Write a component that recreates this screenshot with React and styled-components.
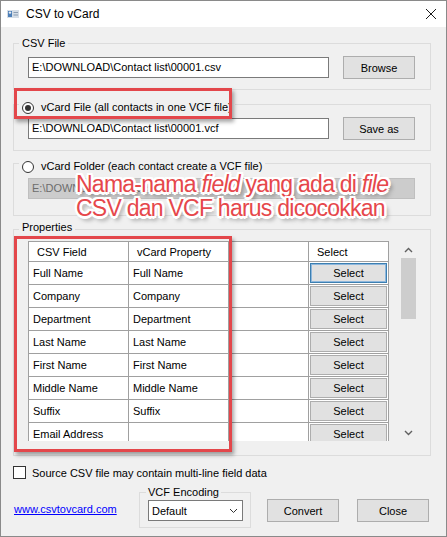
import React from 'react';
import styled, { createGlobalStyle } from 'styled-components';

const GlobalStyle = createGlobalStyle`
  html, body { margin: 0; padding: 0; background: #ffffff; }
  body {
    font-family: "Liberation Sans", Arial, sans-serif;
    font-size: 11px;
    color: #000;
  }
  * { box-sizing: border-box; }
`;

const Window = styled.div`
  width: 447px;
  height: 537px;
  border: 1px solid #8a8a8a;
  background: #f0f0f0;
  display: flex;
  flex-direction: column;
  overflow: hidden;
`;

const TitleBar = styled.div`
  height: 26px;
  flex: none;
  background: #ffffff;
  display: flex;
  align-items: center;
  padding-left: 6px;
  padding-right: 9px;
`;

const Title = styled.span`
  margin-left: 7px;
  font-size: 12px;
  flex: 1;
`;

const Body = styled.div`
  position: relative;
  flex: 1;
  display: flex;
  flex-direction: column;
  padding: 0 15px 0 12px;
`;

const Group = styled.div`
  margin-top: ${p => p.$mt}px;
  border: 1px solid #dcdcdc;
  display: flex;
  flex-direction: column;
  padding: 0 ${p => p.$pr ?? 15}px ${p => p.$pb}px 14px;
`;

const Legend = styled.div`
  align-self: flex-start;
  margin: ${p => p.$offset}px 0 0 -9px;
  padding: 0 3px;
  height: 15px;
  line-height: 15px;
  background: #f0f0f0;
  display: flex;
  align-items: center;
  gap: 7px;
`;

const Radio = styled.span`
  width: 12px;
  height: 12px;
  border-radius: 50%;
  border: 1px solid #333;
  background: #fff;
  display: flex;
  align-items: center;
  justify-content: center;
  &::after {
    content: '';
    width: 6px;
    height: 6px;
    border-radius: 50%;
    background: ${p => (p.$checked ? '#333' : 'transparent')};
  }
`;

const Row = styled.div`
  margin-top: ${p => p.$mt}px;
  height: 23px;
  display: flex;
  align-items: center;
  justify-content: space-between;
`;

const TextBox = styled.div`
  width: ${p => p.$w}px;
  height: 21px;
  line-height: 19px;
  padding: 0 3px;
  border: 1px solid ${p => (p.$disabled ? '#bfbfbf' : '#7a7a7a')};
  background: ${p => (p.$disabled ? '#cccccc' : '#ffffff')};
  color: ${p => (p.$disabled ? '#6d6d6d' : '#000')};
  white-space: nowrap;
  overflow: hidden;
`;

const Button = styled.button`
  width: ${p => p.$w ?? 72}px;
  height: 23px;
  margin: ${p => p.$m ?? '0'};
  padding: 0;
  border: 1px solid #adadad;
  background: #e1e1e1;
  font: inherit;
  color: #000;
  flex: none;
`;

const DataView = styled.div`
  margin-top: 6px;
  height: 200px;
  display: flex;
  justify-content: space-between;
  background: #f0f0f0;
`;

const Table = styled.div`
  width: 361px;
  height: 200px;
  overflow: hidden;
  display: grid;
  grid-template-columns: 100px 100px 80px 80px;
  grid-auto-rows: 23px;
  grid-template-rows: 20px;
  border-left: 1px solid #a0a0a0;
  border-top: 1px solid #a0a0a0;
  align-content: start;
`;

const Cell = styled.div`
  background: #fff;
  border-right: 1px solid #a0a0a0;
  border-bottom: 1px solid #a0a0a0;
  padding-left: ${p => (p.$head ? 8 : 4)}px;
  display: flex;
  align-items: center;
  white-space: nowrap;
`;

const ButtonCell = styled(Cell)`
  padding: 1px 0 0 1px;
  align-items: flex-start;
`;

const GridButton = styled.div`
  width: 77px;
  height: 20px;
  background: #e1e1e1;
  border: 1px solid ${p => (p.$focus ? '#3c7fb1' : '#adadad')};
  box-shadow: ${p => (p.$focus ? 'inset 0 0 0 1px #8fb7dc' : 'none')};
  display: flex;
  align-items: center;
  justify-content: center;
`;

const ScrollBar = styled.div`
  width: 17px;
  display: flex;
  flex-direction: column;
  background: #f0f0f0;
`;

const ScrollArrow = styled.div`
  height: 17px;
  display: flex;
  align-items: center;
  justify-content: center;
`;

const Thumb = styled.div`
  height: 61px;
  margin: 0 1px;
  background: #cdcdcd;
`;

const ScrollTrack = styled.div`
  flex: 1;
`;

const CheckRow = styled.label`
  margin-top: 10px;
  height: 13px;
  display: flex;
  align-items: center;
  gap: 6px;
`;

const CheckBox = styled.span`
  width: 13px;
  height: 13px;
  border: 1px solid #333;
  background: #fff;
`;

const BottomRow = styled.div`
  margin-top: 13px;
  display: flex;
  align-items: flex-start;
`;

const SiteLink = styled.a`
  width: 126px;
  margin-top: 10px;
  padding-left: 1px;
  color: #0000ff;
  text-decoration: underline;
  line-height: 14px;
  flex: none;
`;

const SmallGroup = styled(Group)`
  width: 112px;
  padding: 0 0 6px 8px;
  flex: none;
`;

const SmallLegend = styled(Legend)`
  margin: -8px 0 0 -2px;
  padding: 0 2px;
`;

const Dropdown = styled.div`
  width: 95px;
  height: 21px;
  border: 1px solid #7a7a7a;
  background: #fff;
  display: flex;
  align-items: center;
  justify-content: space-between;
  padding: 0 4px 0 3px;
`;

const Highlight = styled.div`
  position: absolute;
  left: ${p => p.$x}px;
  top: ${p => p.$y}px;
  width: ${p => p.$w}px;
  height: ${p => p.$h}px;
  border: 3px solid #e3474b;
  box-shadow: 2px 3px 4px rgba(0, 0, 0, 0.35);
  pointer-events: none;
`;

const Annotation = styled.div`
  position: absolute;
  left: 75px;
  top: 146px;
  font-size: 23px;
  line-height: 23.5px;
  letter-spacing: -0.75px;
  color: #e6474b;
  white-space: nowrap;
  pointer-events: none;
  text-shadow:
    2.5px 0 0 #fff, -2.5px 0 0 #fff, 0 2.5px 0 #fff, 0 -2.5px 0 #fff,
    1.8px 1.8px 0 #fff, -1.8px -1.8px 0 #fff, 1.8px -1.8px 0 #fff, -1.8px 1.8px 0 #fff,
    3px 4px 4px rgba(0, 0, 0, 0.5);
`;

const Em = styled.em`
  font-style: italic;
`;

const AppIcon = () => (
  <svg width="12" height="10" viewBox="0 0 12 10">
    <rect x="0" y="1" width="12" height="8" fill="#d5dde6" />
    <rect x="1" y="2" width="4" height="6" fill="#4d7fb8" />
    <circle cx="3" cy="3.6" r="1.2" fill="#e8eef5" />
    <rect x="6.5" y="3" width="4.5" height="1" fill="#8a9bb0" />
    <rect x="6.5" y="5.5" width="4.5" height="1" fill="#8a9bb0" />
  </svg>
);

const CloseIcon = () => (
  <svg width="12" height="12" viewBox="0 0 12 12">
    <path d="M1 1 L11 11 M11 1 L1 11" stroke="#1a1a1a" strokeWidth="1" fill="none" />
  </svg>
);

const Chevron = ({ up }) => (
  <svg width="9" height="6" viewBox="0 0 9 6">
    <path d={up ? 'M1 5 L4.5 1.5 L8 5' : 'M1 1 L4.5 4.5 L8 1'} stroke="#606060" strokeWidth="1.4" fill="none" />
  </svg>
);

const fields = [
  ['Full Name', 'Full Name'],
  ['Company', 'Company'],
  ['Department', 'Department'],
  ['Last Name', 'Last Name'],
  ['First Name', 'First Name'],
  ['Middle Name', 'Middle Name'],
  ['Suffix', 'Suffix'],
  ['Email Address', ''],
];

export default function App() {
  return (
    <>
      <GlobalStyle />
      <Window>
        <TitleBar>
          <AppIcon />
          <Title>CSV to vCard</Title>
          <CloseIcon />
        </TitleBar>
        <Body>
          <Group $mt={16} $pb={10}>
            <Legend $offset={-8}>CSV File</Legend>
            <Row $mt={5}>
              <TextBox $w={301}>E:\DOWNLOAD\Contact list\00001.csv</TextBox>
              <Button>Browse</Button>
            </Row>
          </Group>

          <Group $mt={14} $pb={10}>
            <Legend $offset={-5}>
              <Radio $checked />
              vCard File (all contacts in one VCF file)
            </Legend>
            <Row $mt={2}>
              <TextBox $w={301}>E:\DOWNLOAD\Contact list\00001.vcf</TextBox>
              <Button>Save as</Button>
            </Row>
          </Group>

          <Group $mt={12} $pb={15}>
            <Legend $offset={-5}>
              <Radio />
              vCard Folder (each contact create a VCF file)
            </Legend>
            <Row $mt={3}>
              <TextBox $w={387} $disabled>E:\DOWNLOAD\Contact list\</TextBox>
            </Row>
          </Group>

          <Group $mt={13} $pb={14} $pr={13}>
            <Legend $offset={-10}>Properties</Legend>
            <DataView>
              <Table>
                <Cell $head>CSV Field</Cell>
                <Cell $head>vCard Property</Cell>
                <Cell $head />
                <Cell $head>Select</Cell>
                {fields.map(([csv, vcard], i) => (
                  <React.Fragment key={csv}>
                    <Cell>{csv}</Cell>
                    <Cell>{vcard}</Cell>
                    <Cell />
                    <ButtonCell>
                      <GridButton $focus={i === 0}>Select</GridButton>
                    </ButtonCell>
                  </React.Fragment>
                ))}
              </Table>
              <ScrollBar>
                <ScrollArrow><Chevron up /></ScrollArrow>
                <Thumb />
                <ScrollTrack />
                <ScrollArrow><Chevron /></ScrollArrow>
              </ScrollBar>
            </DataView>
          </Group>

          <CheckRow>
            <CheckBox />
            Source CSV file may contain multi-line field data
          </CheckRow>

          <BottomRow>
            <SiteLink href="#">www.csvtovcard.com</SiteLink>
            <SmallGroup $mt={0}>
              <SmallLegend>VCF Encoding</SmallLegend>
              <Dropdown>
                Default
                <svg width="9" height="6" viewBox="0 0 9 6">
                  <path d="M1 1 L4.5 4.5 L8 1" stroke="#333" strokeWidth="1" fill="none" />
                </svg>
              </Dropdown>
            </SmallGroup>
            <Button $m="7px 0 0 16px">Convert</Button>
            <Button $m="7px 0 0 18px">Close</Button>
          </BottomRow>

          <Highlight $x={13} $y={61} $w={218} $h={31} />
          <Highlight $x={13} $y={209} $w={218} $h={216} />
          <Annotation>
            Nama-nama <Em>field</Em> yang ada di <Em>file</Em>
            <br />
            CSV dan VCF harus dicocokkan
          </Annotation>
        </Body>
      </Window>
    </>
  );
}
